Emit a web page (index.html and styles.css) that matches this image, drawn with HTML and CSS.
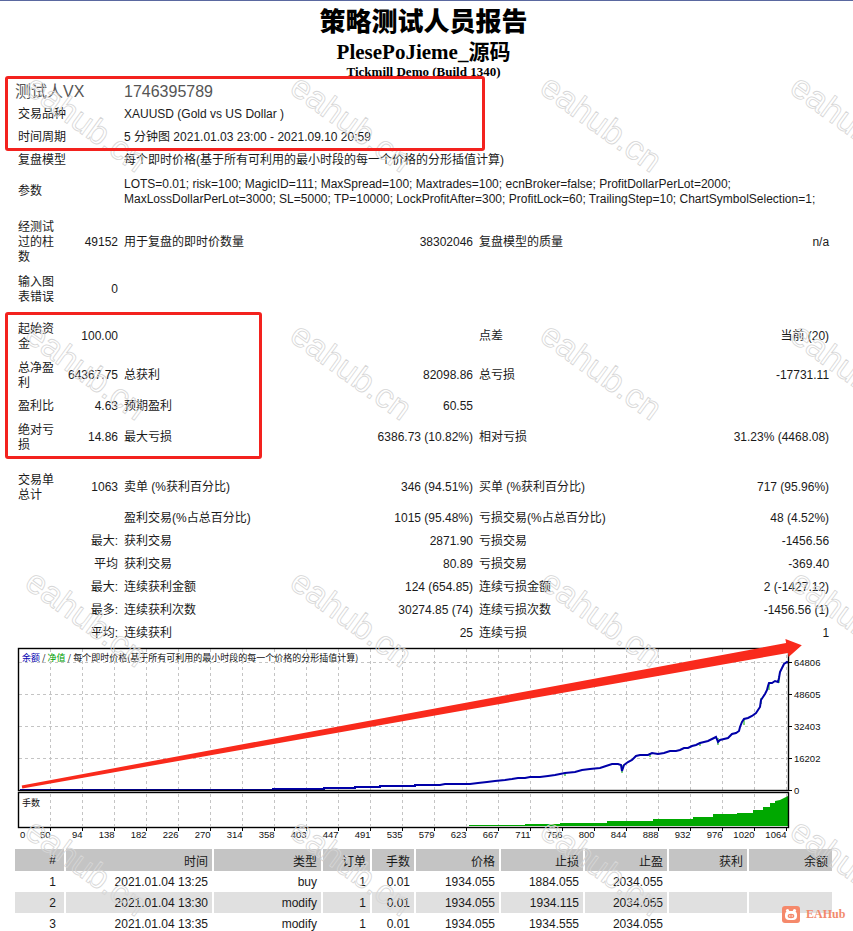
FILE: index.html
```html
<!DOCTYPE html>
<html lang="zh-CN">
<head>
<meta charset="utf-8">
<title>策略测试人员报告</title>
<link rel="stylesheet" href="styles.css">
</head>
<body>
<div class="page">
  <header class="head">
    <div class="title">策略测试人员报告</div>
    <div class="subtitle">PlesePoJieme_源码</div>
    <div class="broker">Tickmill Demo (Build 1340)</div>
  </header>

  <table class="summary">
    <colgroup><col class="c1"><col class="c2"><col class="c3"><col class="c4"><col class="c5"><col class="c6"></colgroup>
    <tr class="h23 vx"><td colspan="2" class="vx-label">测试人VX</td><td colspan="4">1746395789</td></tr>
    <tr class="h23"><td colspan="2">交易品种</td><td colspan="4">XAUUSD (Gold vs US Dollar )</td></tr>
    <tr class="h23"><td colspan="2">时间周期</td><td colspan="4">5 分钟图 2021.01.03 23:00 - 2021.09.10 20:59</td></tr>
    <tr class="h23"><td colspan="2">复盘模型</td><td colspan="4">每个即时价格(基于所有可利用的最小时段的每一个价格的分形插值计算)</td></tr>
    <tr class="h39"><td colspan="2">参数</td><td colspan="4" class="params">LOTS=0.01; risk=100; MagicID=111; MaxSpread=100; Maxtrades=100; ecnBroker=false; ProfitDollarPerLot=2000;<br>MaxLossDollarPerLot=3000; SL=5000; TP=10000; LockProfitAfter=300; ProfitLock=60; TrailingStep=10; ChartSymbolSelection=1;</td></tr>
    <tr class="gap4"><td colspan="6"></td></tr>
    <tr class="h55"><td>经测试过的柱数</td><td class="num">49152</td><td>用于复盘的即时价数量</td><td class="num">38302046</td><td>复盘模型的质量</td><td class="num">n/a</td></tr>
    <tr class="h39"><td>输入图表错误</td><td class="num">0</td><td></td><td></td><td></td><td></td></tr>
    <tr class="gap8"><td colspan="6"></td></tr>
    <tr class="h39"><td>起始资金</td><td class="num">100.00</td><td></td><td></td><td>点差</td><td class="num">当前 (20)</td></tr>
    <tr class="h39"><td>总净盈利</td><td class="num">64367.75</td><td>总获利</td><td class="num">82098.86</td><td>总亏损</td><td class="num">-17731.11</td></tr>
    <tr class="h23"><td>盈利比</td><td class="num">4.63</td><td>预期盈利</td><td class="num">60.55</td><td></td><td></td></tr>
    <tr class="h39"><td>绝对亏损</td><td class="num">14.86</td><td>最大亏损</td><td class="num">6386.73 (10.82%)</td><td>相对亏损</td><td class="num">31.23% (4468.08)</td></tr>
    <tr class="gap11"><td colspan="6"></td></tr>
    <tr class="h39"><td>交易单总计</td><td class="num">1063</td><td>卖单 (%获利百分比)</td><td class="num">346 (94.51%)</td><td>买单 (%获利百分比)</td><td class="num">717 (95.96%)</td></tr>
    <tr class="h23"><td></td><td></td><td>盈利交易(%占总百分比)</td><td class="num">1015 (95.48%)</td><td>亏损交易(%占总百分比)</td><td class="num">48 (4.52%)</td></tr>
    <tr class="h23"><td></td><td class="num">最大:</td><td>获利交易</td><td class="num">2871.90</td><td>亏损交易</td><td class="num">-1456.56</td></tr>
    <tr class="h23"><td></td><td class="num">平均</td><td>获利交易</td><td class="num">80.89</td><td>亏损交易</td><td class="num">-369.40</td></tr>
    <tr class="h23"><td></td><td class="num">最大:</td><td>连续获利金额</td><td class="num">124 (654.85)</td><td>连续亏损金额</td><td class="num">2 (-1427.12)</td></tr>
    <tr class="h23"><td></td><td class="num">最多:</td><td>连续获利次数</td><td class="num">30274.85 (74)</td><td>连续亏损次数</td><td class="num">-1456.56 (1)</td></tr>
    <tr class="h23"><td></td><td class="num">平均:</td><td>连续获利</td><td class="num">25</td><td>连续亏损</td><td class="num">1</td></tr>
  </table>

  <svg class="chart" viewBox="15 645 833 197" width="833" height="197">
    <rect x="15" y="645" width="833" height="197" fill="#fff"/>
    <path class="grid" d="M50.5 649V790M82.5 649V790M114.5 649V790M146.5 649V790M178.5 649V790M210.5 649V790M242.5 649V790M274.5 649V790M306.5 649V790M338.5 649V790M370.5 649V790M402.5 649V790M434.5 649V790M466.5 649V790M498.5 649V790M530.5 649V790M562.5 649V790M594.5 649V790M626.5 649V790M658.5 649V790M690.5 649V790M722.5 649V790M754.5 649V790M786.5 649V790
      M50.5 794V826M82.5 794V826M114.5 794V826M146.5 794V826M178.5 794V826M210.5 794V826M242.5 794V826M274.5 794V826M306.5 794V826M338.5 794V826M370.5 794V826M402.5 794V826M434.5 794V826M466.5 794V826M498.5 794V826M530.5 794V826M562.5 794V826M594.5 794V826M626.5 794V826M658.5 794V826M690.5 794V826M722.5 794V826M754.5 794V826M786.5 794V826
      M19 662.5H788M19 694.5H788M19 726.5H788M19 758.5H788"/>
    <polygon class="vol" points="469,826 469,825 525,825 525,824 560,824 560,823 607,823 607,821 653,821 653,819 693,819 693,817 713,817 713,814 737,814 737,813 753,813 753,810 763,810 763,807 770,807 770,803 775,803 775,801 780,800 784,798 788,796 788,826"/>
    <path class="eqspk" d="M565 773V776M622 765V773M650 753V757M700 742V746M718 738V745M744 719V725M761 698V704M769 683V690M779 676V683"/>
    <polyline class="bal-line" points="20,790 273,790 273,789 324,789 324,788 355,788 355,787 380,787 380,786 415,786 415,785 440,785 445,784 470,784 478,783 487,782 495,781 505,780 512,779 518,778 525,778 530,777 540,777 548,776 555,775 565,773 575,772 582,770 590,769 600,768 606,766 612,764 618,764 621,765 622,771 624,765 628,762 632,760 636,756 640,755 648,755 652,753 658,754 664,753 670,751 676,751 680,750 684,748 688,748 692,746 696,745 700,743 704,742 708,741 712,739 716,737 718,742 720,740 724,739 728,738 732,734 736,733 739,731 740,727 742,722 744,719 748,718 752,716 756,713 758,710 760,707 761,700 763,697 765,694 767,690 768,686 769,683 772,683 775,681 778,682 779,678 780,672 782,668 784,664 787,662 789,663"/>
    <rect class="frame" x="18.5" y="648.5" width="770" height="142"/>
    <rect class="frame" x="18.5" y="792.5" width="770" height="35"/>
    <path class="tick" d="M789 662.5H792M789 694.5H792M789 726.5H792M789 758.5H792M789 790.5H792
      M50.5 828V831M82.5 828V831M114.5 828V831M146.5 828V831M178.5 828V831M210.5 828V831M242.5 828V831M274.5 828V831M306.5 828V831M338.5 828V831M370.5 828V831M402.5 828V831M434.5 828V831M466.5 828V831M498.5 828V831M530.5 828V831M562.5 828V831M594.5 828V831M626.5 828V831M658.5 828V831M690.5 828V831M722.5 828V831M754.5 828V831M786.5 828V831"/>
    <text class="ct" x="22" y="661"><tspan class="bal">余额</tspan> / <tspan class="eq">净值</tspan> / 每个即时价格(基于所有可利用的最小时段的每一个价格的分形插值计算)</text>
    <text class="ct" x="22" y="806">手数</text>
    <g class="ax">
      <text x="794" y="666">64806</text>
      <text x="794" y="698">48605</text>
      <text x="794" y="730">32403</text>
      <text x="794" y="762">16202</text>
      <text x="794" y="794">0</text>
    </g>
    <g class="ax xl">
      <text x="20" y="838">0</text>
      <text x="50.5" y="838">50</text>
      <text x="82.5" y="838">94</text>
      <text x="114.5" y="838">138</text>
      <text x="146.5" y="838">182</text>
      <text x="178.5" y="838">226</text>
      <text x="210.5" y="838">270</text>
      <text x="242.5" y="838">314</text>
      <text x="274.5" y="838">358</text>
      <text x="306.5" y="838">403</text>
      <text x="338.5" y="838">447</text>
      <text x="370.5" y="838">491</text>
      <text x="402.5" y="838">535</text>
      <text x="434.5" y="838">579</text>
      <text x="466.5" y="838">623</text>
      <text x="498.5" y="838">667</text>
      <text x="530.5" y="838">711</text>
      <text x="562.5" y="838">756</text>
      <text x="594.5" y="838">800</text>
      <text x="626.5" y="838">844</text>
      <text x="658.5" y="838">888</text>
      <text x="690.5" y="838">932</text>
      <text x="722.5" y="838">976</text>
      <text x="754.5" y="838">1020</text>
      <text x="786.5" y="838">1064</text>
    </g>
  </svg>

  <table class="deals">
    <colgroup><col class="d1"><col class="d2"><col class="d3"><col class="d4"><col class="d5"><col class="d6"><col class="d7"><col class="d8"><col class="d9"><col class="d10"></colgroup>
    <tr class="dh"><th class="idx">#</th><th>时间</th><th>类型</th><th>订单</th><th>手数</th><th>价格</th><th>止损</th><th>止盈</th><th>获利</th><th>余额</th></tr>
    <tr class="row"><td class="idx">1</td><td>2021.01.04 13:25</td><td>buy</td><td>1</td><td>0.01</td><td>1934.055</td><td>1884.055</td><td>2034.055</td><td></td><td></td></tr>
    <tr class="row alt"><td class="idx">2</td><td>2021.01.04 13:30</td><td>modify</td><td>1</td><td>0.01</td><td>1934.055</td><td>1934.115</td><td>2034.055</td><td></td><td></td></tr>
    <tr class="row"><td class="idx">3</td><td>2021.01.04 13:35</td><td>modify</td><td>1</td><td>0.01</td><td>1934.055</td><td>1934.555</td><td>2034.055</td><td></td><td></td></tr>
  </table>
</div>

<div class="wm wr1 wc1">eahub.cn</div>
<div class="wm wr1 wc2">eahub.cn</div>
<div class="wm wr1 wc3">eahub.cn</div>
<div class="wm wr1 wc4">eahub.cn</div>
<div class="wm wr2 wc1">eahub.cn</div>
<div class="wm wr2 wc2">eahub.cn</div>
<div class="wm wr2 wc3">eahub.cn</div>
<div class="wm wr2 wc4">eahub.cn</div>
<div class="wm wr3 wc1">eahub.cn</div>
<div class="wm wr3 wc2">eahub.cn</div>
<div class="wm wr3 wc3">eahub.cn</div>
<div class="wm wr3 wc4">eahub.cn</div>
<div class="wm wr4 wc1">eahub.cn</div>
<div class="wm wr4 wc2">eahub.cn</div>
<div class="wm wr4 wc3">eahub.cn</div>
<div class="wm wr4 wc4">eahub.cn</div>

<div class="box box-top"></div>
<div class="box box-mid"></div>

<svg class="arrow" viewBox="0 0 853 931" width="853" height="931">
  <polygon points="21.7,785.4 786.1,643.1 785.4,639.1 801.8,645.3 788.6,656.9 787.9,652.9 22.3,788.6"/>
</svg>

<div class="brand">
  <svg class="brand-icon" viewBox="0 0 18 17" width="18" height="17">
    <rect x="0" y="0" width="18" height="17" rx="3" fill="#f5896b"/>
    <circle cx="5.5" cy="4.5" r="1.6" fill="#fff"/>
    <circle cx="12.5" cy="4.5" r="1.6" fill="#fff"/>
    <rect x="3" y="5" width="12" height="9" rx="4" fill="#fff"/>
    <ellipse cx="9" cy="10" rx="3.3" ry="2.2" fill="#f5896b"/>
    <circle cx="7.8" cy="10" r="0.7" fill="#fff"/>
    <circle cx="10.2" cy="10" r="0.7" fill="#fff"/>
  </svg>
  <span class="brand-text">EAHub</span>
</div>
</body>
</html>
```

FILE: styles.css
```css
* { box-sizing: border-box; }

html, body {
  margin: 0;
  padding: 0;
  background: #fff;
}

body {
  position: relative;
  width: 853px;
  height: 931px;
  overflow: hidden;
  font-family: "Liberation Sans", "Noto Sans CJK SC", sans-serif;
  font-size: 12px;
  color: #1a1a1a;
}

.page {
  border-top: 1px solid #5a68a0;
  padding-left: 15px;
}

/* ---------- header ---------- */
.head {
  width: 817px;
  padding-top: 2px;
  text-align: center;
  color: #000;
}

.title {
  font-family: "Noto Sans CJK SC", sans-serif;
  font-weight: 900;
  font-size: 26px;
  line-height: 34px;
}

.subtitle {
  margin-top: 3px;
  font-family: "Liberation Serif", "Noto Sans CJK SC", serif;
  font-weight: 700;
  font-size: 21px;
  line-height: 24px;
}

.broker {
  font-family: "Liberation Serif", serif;
  font-weight: 700;
  font-size: 13px;
  line-height: 16px;
}

/* ---------- summary table ---------- */
.summary {
  width: 817px;
  table-layout: fixed;
  border-collapse: collapse;
  border-spacing: 0;
}

.summary td {
  padding: 0 3px;
  line-height: 15px;
  vertical-align: middle;
  text-align: left;
}

.summary td.num { text-align: right; }

.c1 { width: 46px; }
.c2 { width: 60px; }
.c3 { width: 180px; }
.c4 { width: 175px; }
.c5 { width: 180px; }
.c6 { width: 176px; }

tr.h23 { height: 23px; }
tr.h39 { height: 39px; }
tr.h55 { height: 55px; }
tr.gap4 { height: 4px; }
tr.gap8 { height: 8px; }
tr.gap11 { height: 11px; }

.vx td {
  font-size: 16px;
  line-height: 18px;
  color: #555;
}
.vx td.vx-label { padding-left: 0; }

.params { white-space: nowrap; }

/* ---------- chart ---------- */
.chart {
  display: block;
  width: 833px;
  height: 197px;
}

.grid {
  fill: none;
  stroke: #c4c4c4;
  stroke-width: 1;
  stroke-dasharray: 3 3;
}

.frame {
  fill: none;
  stroke: #000;
  stroke-width: 1.4;
}

.tick {
  fill: none;
  stroke: #000;
  stroke-width: 1;
}

.vol { fill: #00a800; }

.eqspk {
  fill: none;
  stroke: #00b000;
  stroke-width: 1;
}

.bal-line {
  fill: none;
  stroke: #0000a8;
  stroke-width: 2;
}

.ct {
  font-family: "Noto Sans CJK SC", sans-serif;
  font-size: 9px;
  fill: #111;
}
.ct .bal { fill: #0000b0; }
.ct .eq { fill: #00a000; }

.ax {
  font-family: "Liberation Sans", sans-serif;
  font-size: 9.5px;
  fill: #111;
}
.ax.xl text { text-anchor: end; }
.ax.xl text:first-child { text-anchor: start; }

/* ---------- deals table ---------- */
.deals {
  width: 817px;
  margin-top: 7px;
  table-layout: fixed;
  border-collapse: separate;
  border-spacing: 0;
}

.deals th,
.deals td {
  padding: 0 4px 0 0;
  text-align: right;
  font-weight: normal;
  white-space: nowrap;
  color: #1a1a1a;
}

.deals th + th,
.deals td + td { border-left: 2px solid #fff; }

.deals .idx { padding-right: 8px; }

.deals tr.dh { height: 22px; }
.deals tr.dh th { background: #c4c4c4; }
.deals tr.row { height: 21px; }
.deals tr.alt td { background: #e0e0e0; }

.d1 { width: 49px; }
.d2 { width: 148px; }
.d3 { width: 109px; }
.d4 { width: 49px; }
.d5 { width: 44px; }
.d6 { width: 85px; }
.d7 { width: 84px; }
.d8 { width: 84px; }
.d9 { width: 80px; }
.d10 { width: 85px; }

/* ---------- overlays ---------- */
.wm {
  position: absolute;
  font-family: "Liberation Sans", sans-serif;
  font-size: 34px;
  line-height: 1;
  white-space: nowrap;
  color: transparent;
  -webkit-text-stroke: 0.8px #d6d6d6;
  transform: rotate(36deg);
  transform-origin: 0 0;
  pointer-events: none;
}
.wr1 { top: 68px; }
.wr2 { top: 316px; }
.wr3 { top: 563px; }
.wr4 { top: 812px; }
.wc1 { left: 40px; }
.wc2 { left: 305px; }
.wc3 { left: 555px; }
.wc4 { left: 805px; }

.box {
  position: absolute;
  border: 3px solid #f3221e;
  border-radius: 3px;
  pointer-events: none;
}
.box-top { left: 5px; top: 76px; width: 480px; height: 75px; }
.box-mid { left: 5px; top: 312px; width: 257px; height: 147px; }

.arrow {
  position: absolute;
  left: 0;
  top: 0;
  pointer-events: none;
}
.arrow polygon { fill: #f92a1c; }

.brand {
  position: absolute;
  left: 782px;
  top: 906px;
  display: flex;
  align-items: center;
  gap: 6px;
}
.brand-icon { display: block; }
.brand-text {
  font-family: "Liberation Serif", serif;
  font-weight: 700;
  font-size: 12px;
  line-height: 17px;
  color: #f28a6c;
}
```
